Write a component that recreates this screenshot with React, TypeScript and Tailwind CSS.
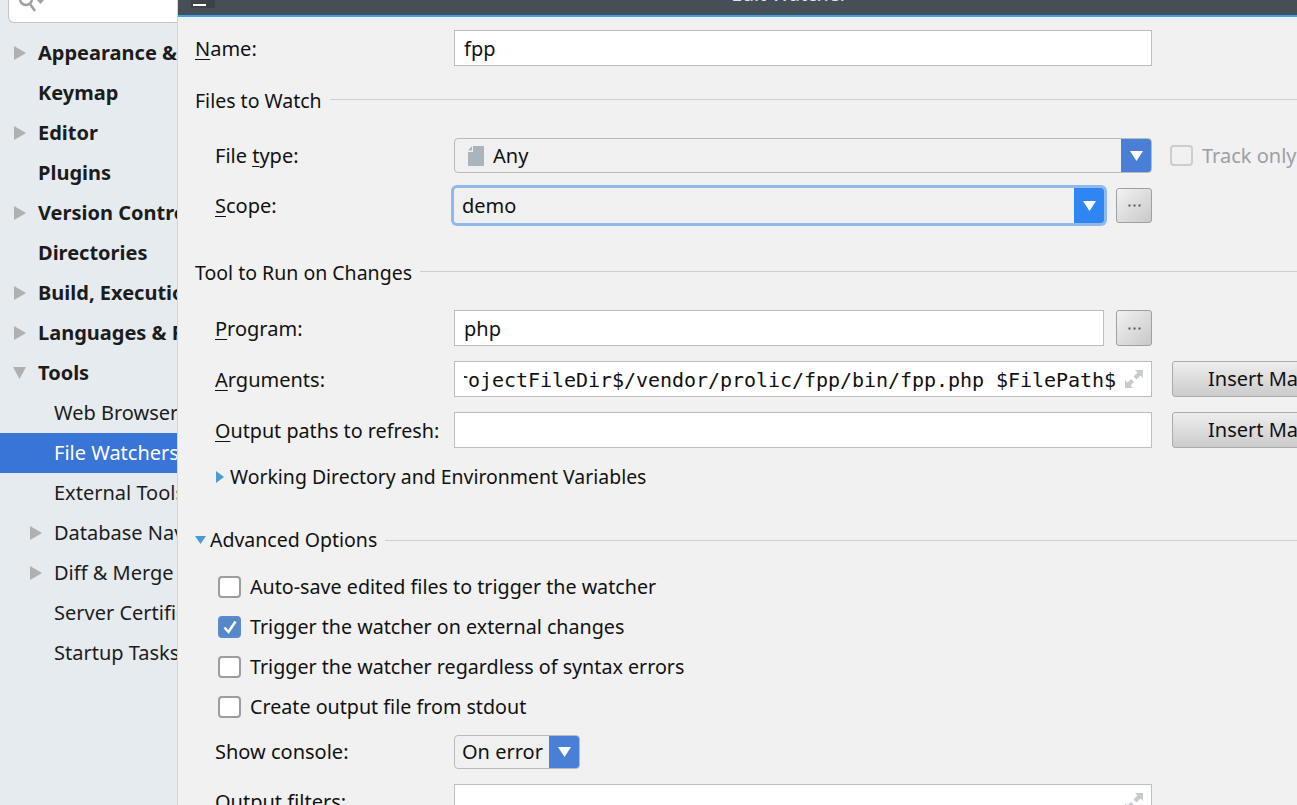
import React from 'react';

const Triangle = ({ dir, className }: { dir: 'right' | 'down'; className: string }) => (
  <svg viewBox="0 0 13 13" preserveAspectRatio="none" className={className}>
    {dir === 'right' ? <polygon points="0,0 13,6.5 0,13" fill="currentColor" /> : <polygon points="0,0 13,0 6.5,13" fill="currentColor" />}
  </svg>
);

const navItems = [
  { label: 'Appearance & Behavior', bold: true, arrow: 'right', depth: 0 },
  { label: 'Keymap', bold: true, depth: 0 },
  { label: 'Editor', bold: true, arrow: 'right', depth: 0 },
  { label: 'Plugins', bold: true, depth: 0 },
  { label: 'Version Control', bold: true, arrow: 'right', depth: 0 },
  { label: 'Directories', bold: true, depth: 0 },
  { label: 'Build, Execution, Deployment', bold: true, arrow: 'right', depth: 0 },
  { label: 'Languages & Frameworks', bold: true, arrow: 'right', depth: 0 },
  { label: 'Tools', bold: true, arrow: 'down', depth: 0 },
  { label: 'Web Browsers', depth: 1 },
  { label: 'File Watchers', depth: 1, selected: true },
  { label: 'External Tools', depth: 1 },
  { label: 'Database Navigator', arrow: 'right', depth: 1 },
  { label: 'Diff & Merge', arrow: 'right', depth: 1 },
  { label: 'Server Certificates', depth: 1 },
  { label: 'Startup Tasks', depth: 1 },
];

const Sidebar = () => (
  <div className="w-[177px] shrink-0 h-full bg-[#e6ebf0] overflow-hidden">
    <div className="ml-2 h-[23px] bg-white border border-t-0 border-r-0 border-[#c4c4c4] rounded-bl-md relative overflow-hidden">
      <svg width="30" height="20" viewBox="0 0 30 20" className="absolute left-[8px] top-0">
        <circle cx="9" cy="-1" r="6" fill="none" stroke="#a0a0a0" strokeWidth="2.5" />
        <line x1="13" y1="4" x2="18" y2="11" stroke="#a0a0a0" strokeWidth="2.5" />
        <polygon points="20,0 27,0 23.5,4" fill="#a0a0a0" />
      </svg>
    </div>
    <div className="mt-[10px]">
      {navItems.map((item) => (
        <div
          key={item.label}
          className={`h-10 flex items-center whitespace-nowrap relative ${item.selected ? 'bg-[#3875d7] text-white' : 'text-[#1c1c1c]'} ${item.bold ? 'font-bold pl-[38px]' : 'pl-[54px]'}`}
        >
          {item.arrow === 'right' && (
            <Triangle
              dir="right"
              className={`absolute w-3 h-3.5 text-[#b0b0b0] ${item.depth === 1 ? 'left-[30px]' : 'left-[14px]'}`}
            />
          )}
          {item.arrow === 'down' && (
            <Triangle dir="down" className="absolute left-[13px] w-[13px] h-3 text-[#b0b0b0]" />
          )}
          {item.label}
        </div>
      ))}
    </div>
  </div>
);

const Label = ({ children, className = 'pt-0.5' }: { children: React.ReactNode; className?: string }) => (
  <div className={`w-[259px] shrink-0 pl-5 whitespace-nowrap ${className}`}>{children}</div>
);

const Mn = ({ children }: { children: React.ReactNode }) => (
  <span className="underline decoration-1 underline-offset-3">{children}</span>
);

const Section = ({ children, arrow, shift }: { children: React.ReactNode; arrow?: boolean; shift?: boolean }) => (
  <div className="h-7 flex items-center whitespace-nowrap text-[19.5px]">
    {arrow && <Triangle dir="down" className="w-[11px] h-2 text-[#4a9bd1] mr-1" />}
    <span className={shift ? 'pt-0.5' : ''}>{children}</span>
    <div className={`flex-1 h-px bg-[#cfcfcf] ml-2 ${shift ? '-mt-0.5' : ''}`} />
  </div>
);

const DotsButton = ({ short }: { short?: boolean }) => (
  <div className={`w-9 ml-3 shrink-0 rounded-[3px] border border-[#a0a0a0] bg-gradient-to-br from-[#f2f2f2] to-[#c9c9c9] flex items-center justify-center ${short ? 'h-[35px]' : 'h-9'}`}>
    <svg width="13" height="3" viewBox="0 0 13 3">
      <g fill="#555">
        <rect x="0.5" y="0.5" width="2" height="2" />
        <rect x="5.5" y="0.5" width="2" height="2" />
        <rect x="10.5" y="0.5" width="2" height="2" />
      </g>
    </svg>
  </div>
);

const InsertButton = () => (
  <div className="w-[200px] h-9 ml-5 shrink-0 rounded-[3px] border border-[#ababab] bg-gradient-to-b from-[#eeeeee] to-[#cbcbcb] flex items-center pl-[35px] whitespace-nowrap">
    Insert Macro...
  </div>
);

const Caret = ({ className }: { className: string }) => (
  <div className={`w-[30px] self-stretch shrink-0 flex items-center justify-center ${className}`}>
    <svg width="13" height="10" viewBox="0 0 13 10"><polygon points="0,0 13,0 6.5,10" fill="#fff" /></svg>
  </div>
);

const ExpandIcon = () => (
  <svg width="18" height="18" viewBox="0 0 18 18" className="shrink-0">
    <g fill="#c5cbd0">
      <polygon points="10,0 18,0 18,8 15.5,5.5 11.5,9.5 8.5,6.5 12.5,2.5" />
      <polygon points="0,10 0,18 8,18 5.5,15.5 9,12 6,9 2.5,12.5" />
    </g>
  </svg>
);

const Check = ({ label, checked }: { label: string; checked?: boolean }) => (
  <div className="h-10 flex items-center pl-[23px] whitespace-nowrap text-[19.7px]">
    <div
      className={`w-[23px] h-[22px] rounded-[4px] border-2 flex items-center justify-center mr-[9px] ${checked ? 'bg-[#5587c9] border-[#5b8bc9]' : 'bg-white border-[#9d9d9d]'}`}
    >
      {checked && (
        <svg width="16" height="16" viewBox="0 0 16 16">
          <path d="M2.5 8.5 L6.5 13 L13.5 2.5" fill="none" stroke="#fff" strokeWidth="2.5" />
        </svg>
      )}
    </div>
    {label}
  </div>
);

export default function App() {
  return (
    <div className="w-[1297px] h-[805px] flex overflow-hidden text-[20px] leading-7 text-[#111] font-['Noto_Sans',sans-serif]">
      <Sidebar />
      <div className="flex-1 min-w-0 h-full flex flex-col bg-[#f1f1f1] border-l border-[#d2d6da]">
        {/* Title bar */}
        <div className="h-[17px] shrink-0 bg-[#474f56] border-b-2 border-[#3aa6e8] relative overflow-hidden flex justify-center pl-[104px]">
          <div className="absolute left-[13px] top-0 w-6 h-2 bg-[#3b4248]">
            <div className="ml-[2px] mt-[4px] w-[13px] h-0.5 bg-white" />
          </div>
          <span className="text-[#e4e4e4] -mt-[20px] text-[19.6px]">Edit Watcher</span>
        </div>

        <div className="pl-[17px] mt-[13px] overflow-hidden">
          {/* Name */}
          <div className="h-9 flex items-center">
            <div className="w-[259px] shrink-0 pt-0.5"><Mn>N</Mn>ame:</div>
            <div className="w-[698px] h-9 pt-0.5 shrink-0 bg-white border border-[#bdbdbd] flex items-center pl-[9px]">fpp</div>
          </div>

          <div className="mt-5"><Section shift>Files to Watch</Section></div>

          <div className="mt-6 h-[35px] flex items-center">
            <Label className="pt-px">File <Mn>t</Mn>ype:</Label>
            <div className="w-[698px] h-[35px] shrink-0 flex items-center bg-[#f0f0f0] border border-[#b9b9b9] rounded-[4px] overflow-hidden">
              <svg width="18" height="22" viewBox="0 0 18 22" className="ml-3 mr-2 shrink-0">
                <polygon points="6,1 17,1 17,21 1,21 1,7 6,7" fill="#aab4bc" />
                <polygon points="1,5.5 5,1 5,5.5" fill="#aab4bc" />
              </svg>
              <span className="flex-1 pt-px">Any</span>
              <Caret className="bg-[#4a7fd8]" />
            </div>
            <div className="w-[23px] h-[21px] ml-[18px] shrink-0 rounded-[4px] border-2 border-[#cdcdcd]" />
            <span className="ml-[9px] pt-px text-[#9aa0a6] whitespace-nowrap">Track only root files</span>
          </div>

          <div className="mt-[15px] h-[35px] flex items-center">
            <Label className="pt-px"><Mn>S</Mn>cope:</Label>
            <div className="w-[650px] h-[35px] shrink-0 flex items-center bg-[#f0f0f0] rounded-[3px] ring-[3px] ring-[#8fb8ec] overflow-hidden pl-2">
              <span className="flex-1 pt-px">demo</span>
              <Caret className="bg-[#2f86f2]" />
            </div>
            <DotsButton short />
          </div>

          <div className="mt-[35px]"><Section shift>Tool to Run on Changes</Section></div>

          <div className="mt-6 h-9 flex items-center">
            <Label><Mn>P</Mn>rogram:</Label>
            <div className="w-[650px] h-9 pt-0.5 shrink-0 bg-white border border-[#bdbdbd] flex items-center pl-[9px]">php</div>
            <DotsButton />
          </div>

          <div className="mt-[15px] h-9 flex items-center">
            <Label><Mn>A</Mn>rguments:</Label>
            <div className="w-[698px] h-9 shrink-0 bg-white border border-[#bdbdbd] flex items-center pl-[9px] pr-2">
              <div className="flex-1 min-w-0 pt-0.5 overflow-hidden flex justify-end font-['DejaVu_Sans_Mono',monospace] tracking-[-0.04px] whitespace-pre">
                <span className="shrink-0">$ProjectFileDir$/vendor/prolic/fpp/bin/fpp.php $FilePath$</span>
              </div>
              <div className="ml-[9px]"><ExpandIcon /></div>
            </div>
            <InsertButton />
          </div>

          <div className="mt-[15px] h-9 flex items-center">
            <Label className="pt-0.5 text-[19.75px]"><Mn>O</Mn>utput paths to refresh:</Label>
            <div className="w-[698px] h-9 shrink-0 bg-white border border-[#bdbdbd]" />
            <InsertButton />
          </div>

          <div className="mt-[15px] h-7 flex items-center pl-[21px] whitespace-nowrap text-[19.45px]">
            <Triangle dir="right" className="w-2 h-3 text-[#4a9bd1] mr-[6px]" />
            Working Directory and Environment Variables
          </div>

          <div className="mt-[35px]"><Section arrow>Advanced Options</Section></div>

          <div className="mt-[13px]">
            <Check label="Auto-save edited files to trigger the watcher" />
            <Check label="Trigger the watcher on external changes" checked />
            <Check label="Trigger the watcher regardless of syntax errors" />
            <Check label="Create output file from stdout" />
          </div>

          <div className="mt-2 h-[34px] flex items-center">
            <Label className="">Show console:</Label>
            <div className="w-[126px] h-[34px] shrink-0 flex items-center bg-[#f0f0f0] border border-[#b9b9b9] rounded-[4px] overflow-hidden pl-[7px]">
              <span className="flex-1 whitespace-nowrap">On error</span>
              <Caret className="bg-[#4a7fd8]" />
            </div>
          </div>

          <div className="mt-[15px] h-9 flex items-center">
            <Label className="">Output filters:</Label>
            <div className="w-[698px] h-9 shrink-0 bg-white border border-[#bdbdbd] flex items-center justify-end pr-2"><ExpandIcon /></div>
          </div>
        </div>
      </div>
    </div>
  );
}
